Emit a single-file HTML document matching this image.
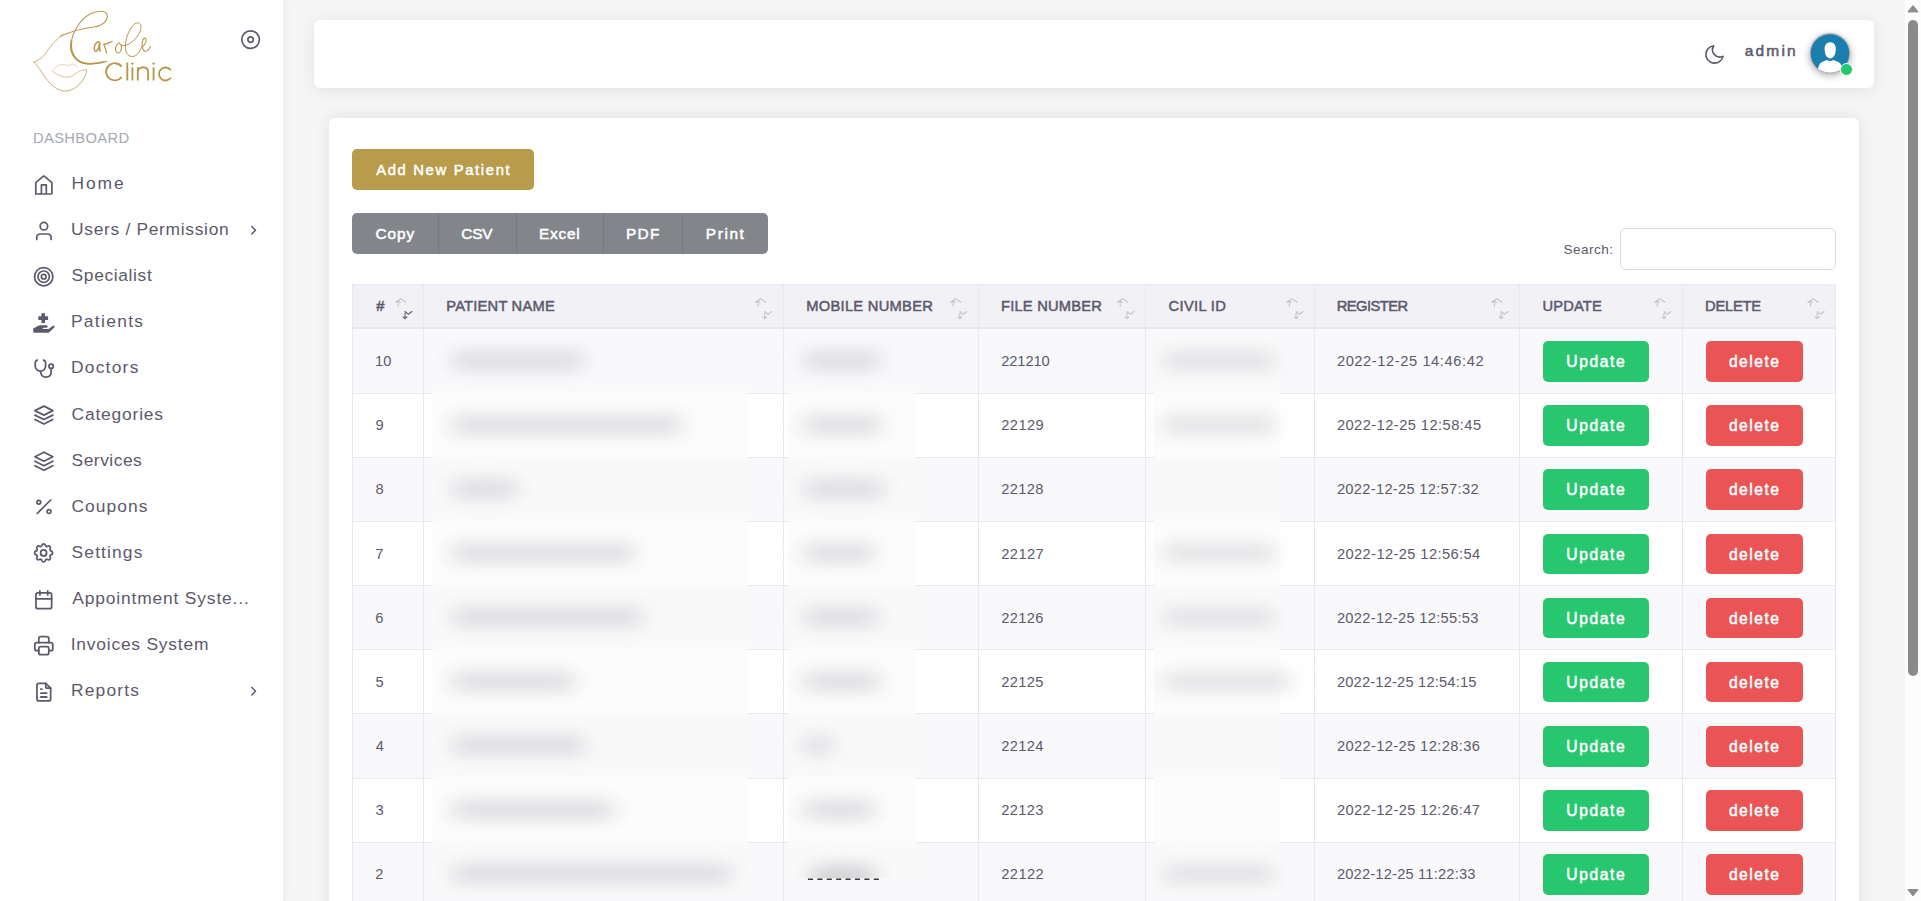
<!DOCTYPE html>
<html><head><meta charset="utf-8"><style>*{box-sizing:border-box;margin:0;padding:0}
html,body{width:1921px;height:901px;overflow:hidden;background:#f5f5f5;-webkit-font-smoothing:antialiased;font-family:"Liberation Sans",sans-serif;color:#5d596c}
.box{position:absolute}
.t{position:absolute;white-space:nowrap;line-height:1}
#sidebar{position:absolute;left:0;top:0;width:283px;height:901px;background:#fff;box-shadow:0 0 10px rgba(0,0,0,0.06)}
#header{position:absolute;left:314px;top:20px;width:1560px;height:68px;background:#fff;border-radius:6px;box-shadow:0 2px 16px rgba(0,0,0,0.08)}
#card{position:absolute;left:329px;top:118px;width:1530px;height:800px;background:#fff;border-radius:6px;box-shadow:0 0 16px rgba(0,0,0,0.09)}
</style></head><body>
<div id="sidebar"></div>
<div id="header"></div>
<div id="card"></div>
<div class="box" style="left:352px;top:149px;width:182px;height:41px;background:#b89b4b;border-radius:5px"></div>
<div class="box" style="left:352px;top:213px;width:416px;height:40.6px;background:#82868b;border-radius:5px"></div>
<div class="box" style="left:437.7px;top:213px;width:1px;height:40.6px;background:#767a7f"></div>
<div class="box" style="left:515.9px;top:213px;width:1px;height:40.6px;background:#767a7f"></div>
<div class="box" style="left:603.0px;top:213px;width:1px;height:40.6px;background:#767a7f"></div>
<div class="box" style="left:682.1px;top:213px;width:1px;height:40.6px;background:#767a7f"></div>
<div class="box" style="left:1620px;top:228px;width:216px;height:42px;border:1px solid #dbdade;border-radius:6px;background:#fff"></div>
<div class="box" style="left:352px;top:284px;width:1483.6px;height:46px;background:#f2f1f6;border-top:1px solid #ebeaf0;border-bottom:3px solid #e8e7ee"></div>
<div class="box" style="left:352px;top:329.40px;width:1483.6px;height:64.17px;background:#f9f9fb;border-bottom:1px solid #e9e8ef"></div>
<div class="box" style="left:352px;top:393.57px;width:1483.6px;height:64.17px;background:#ffffff;border-bottom:1px solid #e9e8ef"></div>
<div class="box" style="left:352px;top:457.74px;width:1483.6px;height:64.17px;background:#f9f9fb;border-bottom:1px solid #e9e8ef"></div>
<div class="box" style="left:352px;top:521.91px;width:1483.6px;height:64.17px;background:#ffffff;border-bottom:1px solid #e9e8ef"></div>
<div class="box" style="left:352px;top:586.08px;width:1483.6px;height:64.17px;background:#f9f9fb;border-bottom:1px solid #e9e8ef"></div>
<div class="box" style="left:352px;top:650.25px;width:1483.6px;height:64.17px;background:#ffffff;border-bottom:1px solid #e9e8ef"></div>
<div class="box" style="left:352px;top:714.42px;width:1483.6px;height:64.17px;background:#f9f9fb;border-bottom:1px solid #e9e8ef"></div>
<div class="box" style="left:352px;top:778.59px;width:1483.6px;height:64.17px;background:#ffffff;border-bottom:1px solid #e9e8ef"></div>
<div class="box" style="left:352px;top:842.76px;width:1483.6px;height:64.17px;background:#f9f9fb;border-bottom:1px solid #e9e8ef"></div>
<div class="box" style="left:351.50px;top:284px;width:1px;height:617px;background:#e9e8ef"></div>
<div class="box" style="left:422.90px;top:284px;width:1px;height:617px;background:#e9e8ef"></div>
<div class="box" style="left:782.60px;top:284px;width:1px;height:617px;background:#e9e8ef"></div>
<div class="box" style="left:977.80px;top:284px;width:1px;height:617px;background:#e9e8ef"></div>
<div class="box" style="left:1144.80px;top:284px;width:1px;height:617px;background:#e9e8ef"></div>
<div class="box" style="left:1314.00px;top:284px;width:1px;height:617px;background:#e9e8ef"></div>
<div class="box" style="left:1519.00px;top:284px;width:1px;height:617px;background:#e9e8ef"></div>
<div class="box" style="left:1681.90px;top:284px;width:1px;height:617px;background:#e9e8ef"></div>
<div class="box" style="left:1835.10px;top:284px;width:1px;height:617px;background:#e9e8ef"></div>
<div class="box" style="left:1543px;top:341.00px;width:106px;height:40.5px;background:#28c76f;border-radius:5px"></div>
<div class="box" style="left:1706px;top:341.00px;width:97px;height:40.5px;background:#ea5455;border-radius:5px"></div>
<div class="box" style="left:1543px;top:405.17px;width:106px;height:40.5px;background:#28c76f;border-radius:5px"></div>
<div class="box" style="left:1706px;top:405.17px;width:97px;height:40.5px;background:#ea5455;border-radius:5px"></div>
<div class="box" style="left:1543px;top:469.34px;width:106px;height:40.5px;background:#28c76f;border-radius:5px"></div>
<div class="box" style="left:1706px;top:469.34px;width:97px;height:40.5px;background:#ea5455;border-radius:5px"></div>
<div class="box" style="left:1543px;top:533.51px;width:106px;height:40.5px;background:#28c76f;border-radius:5px"></div>
<div class="box" style="left:1706px;top:533.51px;width:97px;height:40.5px;background:#ea5455;border-radius:5px"></div>
<div class="box" style="left:1543px;top:597.68px;width:106px;height:40.5px;background:#28c76f;border-radius:5px"></div>
<div class="box" style="left:1706px;top:597.68px;width:97px;height:40.5px;background:#ea5455;border-radius:5px"></div>
<div class="box" style="left:1543px;top:661.85px;width:106px;height:40.5px;background:#28c76f;border-radius:5px"></div>
<div class="box" style="left:1706px;top:661.85px;width:97px;height:40.5px;background:#ea5455;border-radius:5px"></div>
<div class="box" style="left:1543px;top:726.02px;width:106px;height:40.5px;background:#28c76f;border-radius:5px"></div>
<div class="box" style="left:1706px;top:726.02px;width:97px;height:40.5px;background:#ea5455;border-radius:5px"></div>
<div class="box" style="left:1543px;top:790.19px;width:106px;height:40.5px;background:#28c76f;border-radius:5px"></div>
<div class="box" style="left:1706px;top:790.19px;width:97px;height:40.5px;background:#ea5455;border-radius:5px"></div>
<div class="box" style="left:1543px;top:854.36px;width:106px;height:40.5px;background:#28c76f;border-radius:5px"></div>
<div class="box" style="left:1706px;top:854.36px;width:97px;height:40.5px;background:#ea5455;border-radius:5px"></div>
<div class="box" style="left:1905px;top:0;width:16px;height:901px;background:#fdfdfd"></div>
<div class="box" style="left:1908px;top:20px;width:10px;height:655.5px;background:#8b8b8b;border-radius:5px"></div>
<svg class="box" style="left:1904px;top:0" width="17" height="901"><path d="M9 5.8 L13.8 11.8 H4.2 Z" fill="#8b8b8b" stroke="#8b8b8b" stroke-width="1.2" stroke-linejoin="round"/><path d="M9 895.6 L13.8 889.6 H4.2 Z" fill="#8b8b8b" stroke="#8b8b8b" stroke-width="1.2" stroke-linejoin="round"/></svg>
<svg class="box" style="left:0;top:0" width="1921" height="901"><defs><filter id="bl" x="-30%" y="-300%" width="160%" height="700%"><feGaussianBlur stdDeviation="11 9"/></filter><filter id="bb" x="-10%" y="-10%" width="120%" height="120%"><feGaussianBlur stdDeviation="3"/></filter><clipPath id="cp0"><rect x="432.5" y="385" width="315.3" height="506.7"/></clipPath><clipPath id="cp1"><rect x="788.7" y="385" width="127.2" height="493.5"/></clipPath><clipPath id="cp2"><rect x="1154.2" y="333" width="125.8" height="561.0"/></clipPath></defs><g clip-path="url(#cp0)"><g filter="url(#bb)"><rect x="422.5" y="328.9" width="335.3" height="65.2" fill="#f9f9fa"/><rect x="422.5" y="393.1" width="335.3" height="65.2" fill="#fcfcfc"/><rect x="422.5" y="457.2" width="335.3" height="65.2" fill="#f9f9fa"/><rect x="422.5" y="521.4" width="335.3" height="65.2" fill="#fcfcfc"/><rect x="422.5" y="585.6" width="335.3" height="65.2" fill="#f9f9fa"/><rect x="422.5" y="649.8" width="335.3" height="65.2" fill="#fcfcfc"/><rect x="422.5" y="713.9" width="335.3" height="65.2" fill="#f9f9fa"/><rect x="422.5" y="778.1" width="335.3" height="65.2" fill="#fcfcfc"/><rect x="422.5" y="842.3" width="335.3" height="65.2" fill="#f9f9fa"/></g></g><g clip-path="url(#cp1)"><g filter="url(#bb)"><rect x="778.7" y="328.9" width="147.2" height="65.2" fill="#f9f9fa"/><rect x="778.7" y="393.1" width="147.2" height="65.2" fill="#fcfcfc"/><rect x="778.7" y="457.2" width="147.2" height="65.2" fill="#f9f9fa"/><rect x="778.7" y="521.4" width="147.2" height="65.2" fill="#fcfcfc"/><rect x="778.7" y="585.6" width="147.2" height="65.2" fill="#f9f9fa"/><rect x="778.7" y="649.8" width="147.2" height="65.2" fill="#fcfcfc"/><rect x="778.7" y="713.9" width="147.2" height="65.2" fill="#f9f9fa"/><rect x="778.7" y="778.1" width="147.2" height="65.2" fill="#fcfcfc"/><rect x="778.7" y="842.3" width="147.2" height="65.2" fill="#f9f9fa"/></g></g><g clip-path="url(#cp2)"><g filter="url(#bb)"><rect x="1144.2" y="328.9" width="145.8" height="65.2" fill="#f9f9fa"/><rect x="1144.2" y="393.1" width="145.8" height="65.2" fill="#fcfcfc"/><rect x="1144.2" y="457.2" width="145.8" height="65.2" fill="#f9f9fa"/><rect x="1144.2" y="521.4" width="145.8" height="65.2" fill="#fcfcfc"/><rect x="1144.2" y="585.6" width="145.8" height="65.2" fill="#f9f9fa"/><rect x="1144.2" y="649.8" width="145.8" height="65.2" fill="#fcfcfc"/><rect x="1144.2" y="713.9" width="145.8" height="65.2" fill="#f9f9fa"/><rect x="1144.2" y="778.1" width="145.8" height="65.2" fill="#fcfcfc"/><rect x="1144.2" y="842.3" width="145.8" height="65.2" fill="#f9f9fa"/></g></g><g filter="url(#bl)"><rect x="452" y="352.6" width="132.0" height="16" rx="4" fill="#d7d7db"/><rect x="804" y="352.6" width="76.7" height="16" rx="4" fill="#d7d7db"/><rect x="1164" y="353.6" width="110.0" height="14" rx="4" fill="#d9d9dd"/><rect x="452" y="416.8" width="228.7" height="16" rx="4" fill="#d7d7db"/><rect x="804" y="416.8" width="76.0" height="16" rx="4" fill="#d7d7db"/><rect x="1164" y="417.8" width="110.0" height="14" rx="4" fill="#d9d9dd"/><rect x="452" y="480.9" width="65.0" height="16" rx="4" fill="#d7d7db"/><rect x="804" y="480.9" width="80.0" height="16" rx="4" fill="#d7d7db"/><rect x="452" y="545.1" width="182.0" height="16" rx="4" fill="#d7d7db"/><rect x="804" y="545.1" width="70.0" height="16" rx="4" fill="#d7d7db"/><rect x="1164" y="546.1" width="110.0" height="14" rx="4" fill="#d9d9dd"/><rect x="452" y="609.3" width="190.0" height="16" rx="4" fill="#d7d7db"/><rect x="804" y="609.3" width="73.0" height="16" rx="4" fill="#d7d7db"/><rect x="1164" y="610.3" width="110.0" height="14" rx="4" fill="#d9d9dd"/><rect x="452" y="673.5" width="122.0" height="16" rx="4" fill="#d7d7db"/><rect x="804" y="673.5" width="75.0" height="16" rx="4" fill="#d7d7db"/><rect x="1164" y="674.5" width="126.0" height="14" rx="4" fill="#d9d9dd"/><rect x="452" y="737.6" width="133.0" height="16" rx="4" fill="#d7d7db"/><rect x="804" y="737.6" width="28.0" height="16" rx="4" fill="#d7d7db"/><rect x="452" y="801.8" width="161.5" height="16" rx="4" fill="#d7d7db"/><rect x="804" y="801.8" width="70.0" height="16" rx="4" fill="#d7d7db"/><rect x="452" y="866.0" width="279.0" height="16" rx="4" fill="#d7d7db"/><rect x="1164" y="867.0" width="110.0" height="14" rx="4" fill="#d9d9dd"/></g><clipPath id="cpm"><rect x="788.7" y="840" width="120" height="38.5"/></clipPath><g clip-path="url(#cpm)"><g filter="url(#bl)"><rect x="812" y="868" width="62" height="16" rx="4" fill="#c4c4c8"/></g></g><g fill="#3a3a3a"><rect x="807.9" y="878.4" width="5.2" height="1.6" rx="0.6"/><rect x="817.3" y="878.4" width="5.2" height="1.6" rx="0.6"/><rect x="826.7" y="878.4" width="5.2" height="1.6" rx="0.6"/><rect x="836.1" y="878.4" width="5.2" height="1.6" rx="0.6"/><rect x="845.5" y="878.4" width="5.2" height="1.6" rx="0.6"/><rect x="854.9" y="878.4" width="5.2" height="1.6" rx="0.6"/><rect x="864.3" y="878.4" width="5.2" height="1.6" rx="0.6"/><rect x="873.7" y="878.4" width="5.2" height="1.6" rx="0.6"/></g></svg>
<svg class="box" style="left:0;top:0" width="283" height="901">
<path d="M35.8 194 V183.2 Q35.8 182.6 36.3 182.2 L43.1 176.3 Q43.8 175.8 44.5 176.3 L51.4 182.2 Q51.9 182.6 51.9 183.2 V193 Q51.9 194 50.9 194 H36.8 Q35.8 194 35.8 193 Z M41.4 194 V184.9 H46.3 V194" fill="none" stroke="#5d596c" stroke-width="1.7" stroke-linejoin="round"/>
<circle cx="43.9" cy="226.2" r="3.75" fill="none" stroke="#5d596c" stroke-width="1.7"/>
<path d="M36.7 239.4 V237.8 Q36.7 234 40.5 234 H47.3 Q51.1 234 51.1 237.8 V239.4" fill="none" stroke="#5d596c" stroke-width="1.7" stroke-linecap="round"/>
<circle cx="43.7" cy="276.7" r="9.15" fill="none" stroke="#5d596c" stroke-width="1.7"/>
<circle cx="43.7" cy="276.7" r="5.7" fill="none" stroke="#5d596c" stroke-width="1.7"/>
<circle cx="43.7" cy="276.7" r="2.3" fill="none" stroke="#5d596c" stroke-width="1.7"/>
<path d="M41.4 313.2 H45 V316.3 H48.1 V319.9 H45 V323 H41.4 V319.9 H38.3 V316.3 H41.4 Z" fill="#5d596c"/>
<path d="M33.2 328.4 L38.4 325.7 Q39.1 325.3 40 325.3 H46.4 Q47.7 325.3 47.7 326.6 Q47.7 327.7 46.4 327.7 H43.3 Q42.5 327.7 42.5 328.3 Q42.5 329 43.3 329 H47.6 Q48.5 329 49.2 328.5 L53 325.8 Q54 325.2 54.5 326 Q54.9 326.8 54.2 327.6 L49.6 332 Q48.9 332.7 47.9 332.7 H34.2 Q33.2 332.7 33.2 331.7 Z" fill="#5d596c"/>
<path d="M37.3 360.1 Q35.2 360.7 35.2 363.2 V365.9 A5.2 5.2 0 0 0 45.6 365.9 V363.2 Q45.6 360.7 43.5 360.1 M40.4 371 Q40.9 377.1 45.8 377.1 Q51.1 377.1 51.1 372 V368.6" fill="none" stroke="#5d596c" stroke-width="1.75" stroke-linecap="round" stroke-linejoin="round"/><circle cx="51.1" cy="366.3" r="2.2" fill="none" stroke="#5d596c" stroke-width="1.75"/>
<g transform="translate(30.46,401.66) scale(1.12)" fill="none" stroke="#5d596c" stroke-width="1.56" stroke-linecap="round" stroke-linejoin="round"><path d="M12 4l-8 4l8 4l8 -4l-8 -4"/><path d="M4 12l8 4l8 -4"/><path d="M4 16l8 4l8 -4"/></g>
<g transform="translate(30.46,447.76) scale(1.12)" fill="none" stroke="#5d596c" stroke-width="1.56" stroke-linecap="round" stroke-linejoin="round"><path d="M12 4l-8 4l8 4l8 -4l-8 -4"/><path d="M4 12l8 4l8 -4"/><path d="M4 16l8 4l8 -4"/></g>
<path d="M37.3 513.3 L50.7 500" stroke="#5d596c" stroke-width="1.7" stroke-linecap="round"/>
<circle cx="38.8" cy="502.2" r="1.9" fill="none" stroke="#5d596c" stroke-width="1.7"/><circle cx="49" cy="511.6" r="1.9" fill="none" stroke="#5d596c" stroke-width="1.7"/>
<g transform="translate(31.60,540.90) scale(1.0)" fill="none" stroke="#5d596c" stroke-width="1.75" stroke-linecap="round" stroke-linejoin="round"><path d="M10.325 4.317c.426 -1.756 2.924 -1.756 3.35 0a1.724 1.724 0 0 0 2.573 1.066c1.543 -.94 3.31 .826 2.37 2.37a1.724 1.724 0 0 0 1.065 2.572c1.756 .426 1.756 2.924 0 3.35a1.724 1.724 0 0 0 -1.066 2.573c.94 1.543 -.826 3.31 -2.37 2.37a1.724 1.724 0 0 0 -2.572 1.065c-.426 1.756 -2.924 1.756 -3.35 0a1.724 1.724 0 0 0 -2.573 -1.066c-1.543 .94 -3.31 -.826 -2.37 -2.37a1.724 1.724 0 0 0 -1.065 -2.572c-1.756 -.426 -1.756 -2.924 0 -3.35a1.724 1.724 0 0 0 1.066 -2.573c-.94 -1.543 .826 -3.31 2.37 -2.37c1 .608 2.296 .07 2.572 -1.065z"/><circle cx="12" cy="12" r="3"/></g>
<g transform="translate(32.04,588.04) scale(0.98)" fill="none" stroke="#5d596c" stroke-width="1.79" stroke-linecap="round" stroke-linejoin="round"><path d="M4 7a2 2 0 0 1 2 -2h12a2 2 0 0 1 2 2v12a2 2 0 0 1 -2 2h-12a2 2 0 0 1 -2 -2v-12z"/><path d="M16 3v4"/><path d="M8 3v4"/><path d="M4 11h16"/></g>
<g transform="translate(31.80,633.70) scale(1.0)" fill="none" stroke="#5d596c" stroke-width="1.75" stroke-linecap="round" stroke-linejoin="round"><path d="M17 17h2a2 2 0 0 0 2 -2v-4a2 2 0 0 0 -2 -2h-14a2 2 0 0 0 -2 2v4a2 2 0 0 0 2 2h2"/><path d="M17 9v-4a2 2 0 0 0 -2 -2h-6a2 2 0 0 0 -2 2v4"/><path d="M7 15a2 2 0 0 1 2 -2h6a2 2 0 0 1 2 2v4a2 2 0 0 1 -2 2h-6a2 2 0 0 1 -2 -2z"/></g>
<g transform="translate(32.04,680.34) scale(0.98)" fill="none" stroke="#5d596c" stroke-width="1.79" stroke-linecap="round" stroke-linejoin="round"><path d="M14 3v4a1 1 0 0 0 1 1h4"/><path d="M17 21h-10a2 2 0 0 1 -2 -2v-14a2 2 0 0 1 2 -2h7l5 5v11a2 2 0 0 1 -2 2z"/><path d="M9 9l1 0"/><path d="M9 13l6 0"/><path d="M9 17l6 0"/></g>
<path d="M251.8 226.4 L255.5 230.2 L251.8 234" fill="none" stroke="#5d596c" stroke-width="1.5" stroke-linecap="round" stroke-linejoin="round"/>
<path d="M251.8 687.4 L255.5 691.2 L251.8 695" fill="none" stroke="#5d596c" stroke-width="1.5" stroke-linecap="round" stroke-linejoin="round"/>
<circle cx="250.6" cy="39.6" r="8.8" fill="none" stroke="#5d596c" stroke-width="1.7"/><circle cx="250.6" cy="39.6" r="2.7" fill="none" stroke="#5d596c" stroke-width="1.7"/>
</svg>
<svg class="box" style="left:1690px;top:20px" width="180" height="70">
<path d="M23.799999999999955 25.799999999999997 A8.7 8.7 0 1 0 33.09999999999991 36.2 A7.2 7.2 0 0 1 23.799999999999955 25.799999999999997 Z" fill="none" stroke="#5d596c" stroke-width="1.6" stroke-linejoin="round"/>
</svg>
<div class="box" style="left:1809.3px;top:32.7px;width:41.4px;height:41.4px;border-radius:50%;box-shadow:0 2px 7px rgba(0,0,0,0.28)"></div>
<svg class="box" style="left:1800px;top:25px" width="60" height="60"><defs><clipPath id="avc"><circle cx="30" cy="28.5" r="19.3"/></clipPath></defs><circle cx="30" cy="28.5" r="20.8" fill="#bfbaba"/><circle cx="30" cy="28.5" r="19.3" fill="#1a7eae"/><g clip-path="url(#avc)" fill="#fff"><path d="M24.6 25 Q24.2 17.2 30.2 17.2 Q36.1 17.2 35.8 25 Q35.6 29.5 33.6 31.8 Q31.8 33.4 30.2 33.4 Q28.6 33.4 26.8 31.8 Q24.8 29.5 24.6 25 Z"/><path d="M17.6 52 Q17.2 38.5 22 37 L27 35 Q30.2 37.2 33.4 35 L38.4 37 Q43 38.5 42.6 52 Z"/></g></svg>
<div class="box" style="left:1839.6px;top:62.6px;width:13px;height:13px;border-radius:50%;background:#28c76f;border:1.6px solid #fff"></div>
<svg class="box" style="left:0;top:0" width="200" height="100">
<path d="M63.5 34.3 C56 39 50 47 45.5 53.5 C42 58 37.5 61.5 33.3 62 C37 64 40 70 45.5 77.8 C51 85 57 90.5 64.4 91 C72 91.3 80 86 84 78 C86.5 73 87.5 70 85.5 69.4" fill="none" stroke="#b8964a" stroke-width="0.9" opacity="0.85"/>
<path d="M52.2 70.5 C56 67 59 64.5 62.2 64.4 C64.5 64.3 66 65.6 67.8 65.5 C69.5 65.4 70.5 63.8 72.2 63.9 C74.5 64 76.5 66.5 77.8 67.8" fill="none" stroke="#b8964a" stroke-width="0.7" opacity="0.55"/>
<path d="M52.2 70.5 C55 73.5 60 76.8 66.7 77.2 C71.5 77.4 74 74.5 76.5 72.8 C80 70.6 84 69.6 86.7 69.4" fill="none" stroke="#b8964a" stroke-width="0.8" opacity="0.7"/>
<path d="M60 36.3 C70 32 84 28 94 27 C102 26 108.5 21 107 14.5 C105.5 10 97.5 10.5 90 14 C80 19.5 73 32 71 42 C69 52 74 62 86 63.6 C93 64.3 101 62.8 106.7 61.4" fill="none" stroke="#b8964a" stroke-width="1.1"/>
<path d="M71.6 40 C70 50 73 60 84 63.2 C91 64.4 99 63.3 104 62" fill="none" stroke="#b8964a" stroke-width="1.7"/>
<path d="M99.8 42.5 C97 41 94.5 44 94.3 48 C94.1 51.5 96 52 97.5 50 C98.5 48.5 99.3 45 99.8 42.3 C99.5 46 99.2 50 100.5 51.5" fill="none" stroke="#b8964a" stroke-width="1.5"/>
<path d="M106.8 53.3 C106.2 50.5 105 47.2 103.8 44.4 C106.5 44.2 109.5 42.6 112.6 41.3" fill="none" stroke="#b8964a" stroke-width="1.2"/>
<path d="M119.5 43.3 C116.5 43.3 115.3 47.5 115.5 50 C115.8 53 118.5 54 120.5 51.5 C122 49.5 122 45 119.5 43.3 C120.2 45 121 45.6 122 45.6" fill="none" stroke="#b8964a" stroke-width="1.1"/>
<path d="M122 45.6 C124 45.6 126 45.4 128 44.5 C134 41.5 141.3 33.5 141 26.5 C140.8 22.5 137 21.5 133.5 25 C128.5 30 125 40 125.3 48 C125.6 54 129 57 133 56.5 C137 56 140 51 141.3 47.6" fill="none" stroke="#b8964a" stroke-width="1.0"/>
<path d="M141.3 47.6 C143.5 46.5 146.5 43 146 39.5 C145.5 37 143 38 142.3 42 C141.6 46 142.5 50.5 145 51.2 C147.3 51.8 149.5 48.5 150.6 46.3" fill="none" stroke="#b8964a" stroke-width="1.1"/>
<path d="M121.6 66.6 A8.6 8.6 0 1 0 121.6 77.0" fill="none" stroke="#b8964a" stroke-width="1.85"/>
<path d="M127.3 62.4 V80.5 M132.4 67.3 V80.5 M153.6 67.3 V80.5" fill="none" stroke="#b8964a" stroke-width="1.85"/>
<circle cx="132.4" cy="63.6" r="1.2" fill="#b8964a"/><circle cx="153.6" cy="63.6" r="1.2" fill="#b8964a"/>
<path d="M137.8 67.3 V80.5 M137.8 72.5 C137.8 69 140.5 67.2 143.2 67.2 C146 67.2 148.1 69 148.1 72.5 V80.5" fill="none" stroke="#b8964a" stroke-width="1.85"/>
<path d="M170.8 70.2 A6.5 6.5 0 1 0 170.8 77.8" fill="none" stroke="#b8964a" stroke-width="1.85"/>
</svg>
<svg class="box" style="left:0;top:0" width="1921" height="340"><path d="M395.70 302.2 L400.80 298.6 L405.90 302.2 M398.30 300.7 V306 M396.30 302.4 L398.30 300.7 L400.30 302.4" fill="none" stroke="#c4c3ca" stroke-width="1.1" stroke-linecap="round"/>
<path d="M405.00 311.5 L408.40 314.3 L411.90 311.5 M405.00 313 V318.6 M403.00 316.8 L405.00 318.6 L407.00 316.8" fill="none" stroke="#5d596c" stroke-width="1.1" stroke-linecap="round"/><path d="M755.40 302.2 L760.50 298.6 L765.60 302.2 M758.00 300.7 V306 M756.00 302.4 L758.00 300.7 L760.00 302.4" fill="none" stroke="#c4c3ca" stroke-width="1.1" stroke-linecap="round"/>
<path d="M764.70 311.5 L768.10 314.3 L771.60 311.5 M764.70 313 V318.6 M762.70 316.8 L764.70 318.6 L766.70 316.8" fill="none" stroke="#c4c3ca" stroke-width="1.1" stroke-linecap="round"/><path d="M950.60 302.2 L955.70 298.6 L960.80 302.2 M953.20 300.7 V306 M951.20 302.4 L953.20 300.7 L955.20 302.4" fill="none" stroke="#c4c3ca" stroke-width="1.1" stroke-linecap="round"/>
<path d="M959.90 311.5 L963.30 314.3 L966.80 311.5 M959.90 313 V318.6 M957.90 316.8 L959.90 318.6 L961.90 316.8" fill="none" stroke="#c4c3ca" stroke-width="1.1" stroke-linecap="round"/><path d="M1117.60 302.2 L1122.70 298.6 L1127.80 302.2 M1120.20 300.7 V306 M1118.20 302.4 L1120.20 300.7 L1122.20 302.4" fill="none" stroke="#c4c3ca" stroke-width="1.1" stroke-linecap="round"/>
<path d="M1126.90 311.5 L1130.30 314.3 L1133.80 311.5 M1126.90 313 V318.6 M1124.90 316.8 L1126.90 318.6 L1128.90 316.8" fill="none" stroke="#c4c3ca" stroke-width="1.1" stroke-linecap="round"/><path d="M1286.80 302.2 L1291.90 298.6 L1297.00 302.2 M1289.40 300.7 V306 M1287.40 302.4 L1289.40 300.7 L1291.40 302.4" fill="none" stroke="#c4c3ca" stroke-width="1.1" stroke-linecap="round"/>
<path d="M1296.10 311.5 L1299.50 314.3 L1303.00 311.5 M1296.10 313 V318.6 M1294.10 316.8 L1296.10 318.6 L1298.10 316.8" fill="none" stroke="#c4c3ca" stroke-width="1.1" stroke-linecap="round"/><path d="M1491.80 302.2 L1496.90 298.6 L1502.00 302.2 M1494.40 300.7 V306 M1492.40 302.4 L1494.40 300.7 L1496.40 302.4" fill="none" stroke="#c4c3ca" stroke-width="1.1" stroke-linecap="round"/>
<path d="M1501.10 311.5 L1504.50 314.3 L1508.00 311.5 M1501.10 313 V318.6 M1499.10 316.8 L1501.10 318.6 L1503.10 316.8" fill="none" stroke="#c4c3ca" stroke-width="1.1" stroke-linecap="round"/><path d="M1654.70 302.2 L1659.80 298.6 L1664.90 302.2 M1657.30 300.7 V306 M1655.30 302.4 L1657.30 300.7 L1659.30 302.4" fill="none" stroke="#c4c3ca" stroke-width="1.1" stroke-linecap="round"/>
<path d="M1664.00 311.5 L1667.40 314.3 L1670.90 311.5 M1664.00 313 V318.6 M1662.00 316.8 L1664.00 318.6 L1666.00 316.8" fill="none" stroke="#c4c3ca" stroke-width="1.1" stroke-linecap="round"/><path d="M1807.90 302.2 L1813.00 298.6 L1818.10 302.2 M1810.50 300.7 V306 M1808.50 302.4 L1810.50 300.7 L1812.50 302.4" fill="none" stroke="#c4c3ca" stroke-width="1.1" stroke-linecap="round"/>
<path d="M1817.20 311.5 L1820.60 314.3 L1824.10 311.5 M1817.20 313 V318.6 M1815.20 316.8 L1817.20 318.6 L1819.20 316.8" fill="none" stroke="#c4c3ca" stroke-width="1.1" stroke-linecap="round"/></svg>
<span class="t" style="left:71.50px;top:175.00px;font-size:17.4px;letter-spacing:1.921px;color:#5d596c;">Home</span>
<span class="t" style="left:71.00px;top:221.00px;font-size:17.4px;letter-spacing:0.693px;color:#5d596c;">Users / Permission</span>
<span class="t" style="left:71.60px;top:267.00px;font-size:17.4px;letter-spacing:0.641px;color:#5d596c;">Specialist</span>
<span class="t" style="left:70.90px;top:313.00px;font-size:17.4px;letter-spacing:1.333px;color:#5d596c;">Patients</span>
<span class="t" style="left:70.90px;top:359.00px;font-size:17.4px;letter-spacing:1.259px;color:#5d596c;">Doctors</span>
<span class="t" style="left:71.50px;top:406.00px;font-size:17.4px;letter-spacing:0.828px;color:#5d596c;">Categories</span>
<span class="t" style="left:71.60px;top:452.00px;font-size:17.4px;letter-spacing:0.497px;color:#5d596c;">Services</span>
<span class="t" style="left:71.50px;top:498.00px;font-size:17.4px;letter-spacing:1.042px;color:#5d596c;">Coupons</span>
<span class="t" style="left:71.60px;top:544.00px;font-size:17.4px;letter-spacing:1.133px;color:#5d596c;">Settings</span>
<span class="t" style="left:72.30px;top:590.00px;font-size:17.4px;letter-spacing:0.841px;color:#5d596c;">Appointment Syste...</span>
<span class="t" style="left:70.70px;top:636.00px;font-size:17.4px;letter-spacing:0.794px;color:#5d596c;">Invoices System</span>
<span class="t" style="left:70.90px;top:682.00px;font-size:17.4px;letter-spacing:1.212px;color:#5d596c;">Reports</span>
<span class="t" style="left:33.10px;top:131.00px;font-size:14.8px;letter-spacing:0.280px;color:#a5a8b5;">DASHBOARD</span>
<span class="t" style="left:1744.65px;top:43.00px;font-size:15.5px;-webkit-text-stroke:0.5px #5d596c;letter-spacing:2.201px;color:#5d596c;">admin</span>
<span class="t" style="left:376.15px;top:163.00px;font-size:14.8px;-webkit-text-stroke:0.5px #fff;letter-spacing:1.669px;color:#fff;">Add New Patient</span>
<span class="t" style="left:375.45px;top:226.00px;font-size:15.4px;-webkit-text-stroke:0.5px #fff;letter-spacing:0.983px;color:#fff;">Copy</span>
<span class="t" style="left:461.15px;top:226.00px;font-size:15.4px;-webkit-text-stroke:0.5px #fff;letter-spacing:-0.097px;color:#fff;">CSV</span>
<span class="t" style="left:539.05px;top:226.00px;font-size:15.4px;-webkit-text-stroke:0.5px #fff;letter-spacing:0.766px;color:#fff;">Excel</span>
<span class="t" style="left:626.05px;top:226.00px;font-size:15.4px;-webkit-text-stroke:0.5px #fff;letter-spacing:1.253px;color:#fff;">PDF</span>
<span class="t" style="left:705.85px;top:226.00px;font-size:15.4px;-webkit-text-stroke:0.5px #fff;letter-spacing:1.578px;color:#fff;">Print</span>
<span class="t" style="left:1563.40px;top:243.00px;font-size:13.6px;letter-spacing:0.485px;color:#5d596c;">Search:</span>
<span class="t" style="left:376.25px;top:299.00px;font-size:14.7px;-webkit-text-stroke:0.5px #5d596c;letter-spacing:0.000px;color:#5d596c;">#</span>
<span class="t" style="left:446.25px;top:299.00px;font-size:14.7px;-webkit-text-stroke:0.5px #5d596c;letter-spacing:0.214px;color:#5d596c;">PATIENT NAME</span>
<span class="t" style="left:806.25px;top:299.00px;font-size:14.7px;-webkit-text-stroke:0.5px #5d596c;letter-spacing:0.282px;color:#5d596c;">MOBILE NUMBER</span>
<span class="t" style="left:1001.05px;top:299.00px;font-size:14.7px;-webkit-text-stroke:0.5px #5d596c;letter-spacing:0.199px;color:#5d596c;">FILE NUMBER</span>
<span class="t" style="left:1168.55px;top:299.00px;font-size:14.7px;-webkit-text-stroke:0.5px #5d596c;letter-spacing:0.324px;color:#5d596c;">CIVIL ID</span>
<span class="t" style="left:1336.65px;top:299.00px;font-size:14.7px;-webkit-text-stroke:0.5px #5d596c;letter-spacing:-0.504px;color:#5d596c;">REGISTER</span>
<span class="t" style="left:1542.45px;top:299.00px;font-size:14.7px;-webkit-text-stroke:0.5px #5d596c;letter-spacing:0.154px;color:#5d596c;">UPDATE</span>
<span class="t" style="left:1705.05px;top:299.00px;font-size:14.7px;-webkit-text-stroke:0.5px #5d596c;letter-spacing:-0.216px;color:#5d596c;">DELETE</span>
<span class="t" style="left:374.90px;top:354.00px;font-size:14.7px;letter-spacing:0.225px;color:#5d596c;">10</span>
<span class="t" style="left:1001.30px;top:354.00px;font-size:14.7px;letter-spacing:-0.135px;color:#5d596c;">221210</span>
<span class="t" style="left:1336.90px;top:354.00px;font-size:14.7px;letter-spacing:0.571px;color:#5d596c;">2022-12-25 14:46:42</span>
<span class="t" style="left:1566.25px;top:354.00px;font-size:15.6px;-webkit-text-stroke:0.5px #fff;letter-spacing:1.634px;color:#fff;">Update</span>
<span class="t" style="left:1728.95px;top:354.00px;font-size:15.6px;-webkit-text-stroke:0.5px #fff;letter-spacing:1.494px;color:#fff;">delete</span>
<span class="t" style="left:375.40px;top:418.00px;font-size:14.7px;letter-spacing:0.000px;color:#5d596c;">9</span>
<span class="t" style="left:1001.30px;top:418.00px;font-size:14.7px;letter-spacing:0.375px;color:#5d596c;">22129</span>
<span class="t" style="left:1336.90px;top:418.00px;font-size:14.7px;letter-spacing:0.432px;color:#5d596c;">2022-12-25 12:58:45</span>
<span class="t" style="left:1566.25px;top:418.00px;font-size:15.6px;-webkit-text-stroke:0.5px #fff;letter-spacing:1.634px;color:#fff;">Update</span>
<span class="t" style="left:1728.95px;top:418.00px;font-size:15.6px;-webkit-text-stroke:0.5px #fff;letter-spacing:1.494px;color:#fff;">delete</span>
<span class="t" style="left:375.40px;top:482.00px;font-size:14.7px;letter-spacing:0.000px;color:#5d596c;">8</span>
<span class="t" style="left:1001.30px;top:482.00px;font-size:14.7px;letter-spacing:0.350px;color:#5d596c;">22128</span>
<span class="t" style="left:1336.90px;top:482.00px;font-size:14.7px;letter-spacing:0.293px;color:#5d596c;">2022-12-25 12:57:32</span>
<span class="t" style="left:1566.25px;top:482.00px;font-size:15.6px;-webkit-text-stroke:0.5px #fff;letter-spacing:1.634px;color:#fff;">Update</span>
<span class="t" style="left:1728.95px;top:482.00px;font-size:15.6px;-webkit-text-stroke:0.5px #fff;letter-spacing:1.494px;color:#fff;">delete</span>
<span class="t" style="left:375.30px;top:547.00px;font-size:14.7px;letter-spacing:0.000px;color:#5d596c;">7</span>
<span class="t" style="left:1001.30px;top:547.00px;font-size:14.7px;letter-spacing:0.375px;color:#5d596c;">22127</span>
<span class="t" style="left:1336.90px;top:547.00px;font-size:14.7px;letter-spacing:0.388px;color:#5d596c;">2022-12-25 12:56:54</span>
<span class="t" style="left:1566.25px;top:547.00px;font-size:15.6px;-webkit-text-stroke:0.5px #fff;letter-spacing:1.634px;color:#fff;">Update</span>
<span class="t" style="left:1728.95px;top:547.00px;font-size:15.6px;-webkit-text-stroke:0.5px #fff;letter-spacing:1.494px;color:#fff;">delete</span>
<span class="t" style="left:375.30px;top:611.00px;font-size:14.7px;letter-spacing:0.000px;color:#5d596c;">6</span>
<span class="t" style="left:1001.30px;top:611.00px;font-size:14.7px;letter-spacing:0.350px;color:#5d596c;">22126</span>
<span class="t" style="left:1336.90px;top:611.00px;font-size:14.7px;letter-spacing:0.288px;color:#5d596c;">2022-12-25 12:55:53</span>
<span class="t" style="left:1566.25px;top:611.00px;font-size:15.6px;-webkit-text-stroke:0.5px #fff;letter-spacing:1.634px;color:#fff;">Update</span>
<span class="t" style="left:1728.95px;top:611.00px;font-size:15.6px;-webkit-text-stroke:0.5px #fff;letter-spacing:1.494px;color:#fff;">delete</span>
<span class="t" style="left:375.50px;top:675.00px;font-size:14.7px;letter-spacing:0.000px;color:#5d596c;">5</span>
<span class="t" style="left:1001.30px;top:675.00px;font-size:14.7px;letter-spacing:0.350px;color:#5d596c;">22125</span>
<span class="t" style="left:1336.90px;top:675.00px;font-size:14.7px;letter-spacing:0.176px;color:#5d596c;">2022-12-25 12:54:15</span>
<span class="t" style="left:1566.25px;top:675.00px;font-size:15.6px;-webkit-text-stroke:0.5px #fff;letter-spacing:1.634px;color:#fff;">Update</span>
<span class="t" style="left:1728.95px;top:675.00px;font-size:15.6px;-webkit-text-stroke:0.5px #fff;letter-spacing:1.494px;color:#fff;">delete</span>
<span class="t" style="left:375.70px;top:739.00px;font-size:14.7px;letter-spacing:0.000px;color:#5d596c;">4</span>
<span class="t" style="left:1001.30px;top:739.00px;font-size:14.7px;letter-spacing:0.300px;color:#5d596c;">22124</span>
<span class="t" style="left:1336.90px;top:739.00px;font-size:14.7px;letter-spacing:0.365px;color:#5d596c;">2022-12-25 12:28:36</span>
<span class="t" style="left:1566.25px;top:739.00px;font-size:15.6px;-webkit-text-stroke:0.5px #fff;letter-spacing:1.634px;color:#fff;">Update</span>
<span class="t" style="left:1728.95px;top:739.00px;font-size:15.6px;-webkit-text-stroke:0.5px #fff;letter-spacing:1.494px;color:#fff;">delete</span>
<span class="t" style="left:375.50px;top:803.00px;font-size:14.7px;letter-spacing:0.000px;color:#5d596c;">3</span>
<span class="t" style="left:1001.30px;top:803.00px;font-size:14.7px;letter-spacing:0.350px;color:#5d596c;">22123</span>
<span class="t" style="left:1336.90px;top:803.00px;font-size:14.7px;letter-spacing:0.371px;color:#5d596c;">2022-12-25 12:26:47</span>
<span class="t" style="left:1566.25px;top:803.00px;font-size:15.6px;-webkit-text-stroke:0.5px #fff;letter-spacing:1.634px;color:#fff;">Update</span>
<span class="t" style="left:1728.95px;top:803.00px;font-size:15.6px;-webkit-text-stroke:0.5px #fff;letter-spacing:1.494px;color:#fff;">delete</span>
<span class="t" style="left:375.30px;top:867.00px;font-size:14.7px;letter-spacing:0.000px;color:#5d596c;">2</span>
<span class="t" style="left:1001.30px;top:867.00px;font-size:14.7px;letter-spacing:0.375px;color:#5d596c;">22122</span>
<span class="t" style="left:1336.90px;top:867.00px;font-size:14.7px;letter-spacing:0.182px;color:#5d596c;">2022-12-25 11:22:33</span>
<span class="t" style="left:1566.25px;top:867.00px;font-size:15.6px;-webkit-text-stroke:0.5px #fff;letter-spacing:1.634px;color:#fff;">Update</span>
<span class="t" style="left:1728.95px;top:867.00px;font-size:15.6px;-webkit-text-stroke:0.5px #fff;letter-spacing:1.494px;color:#fff;">delete</span>
</body></html>
